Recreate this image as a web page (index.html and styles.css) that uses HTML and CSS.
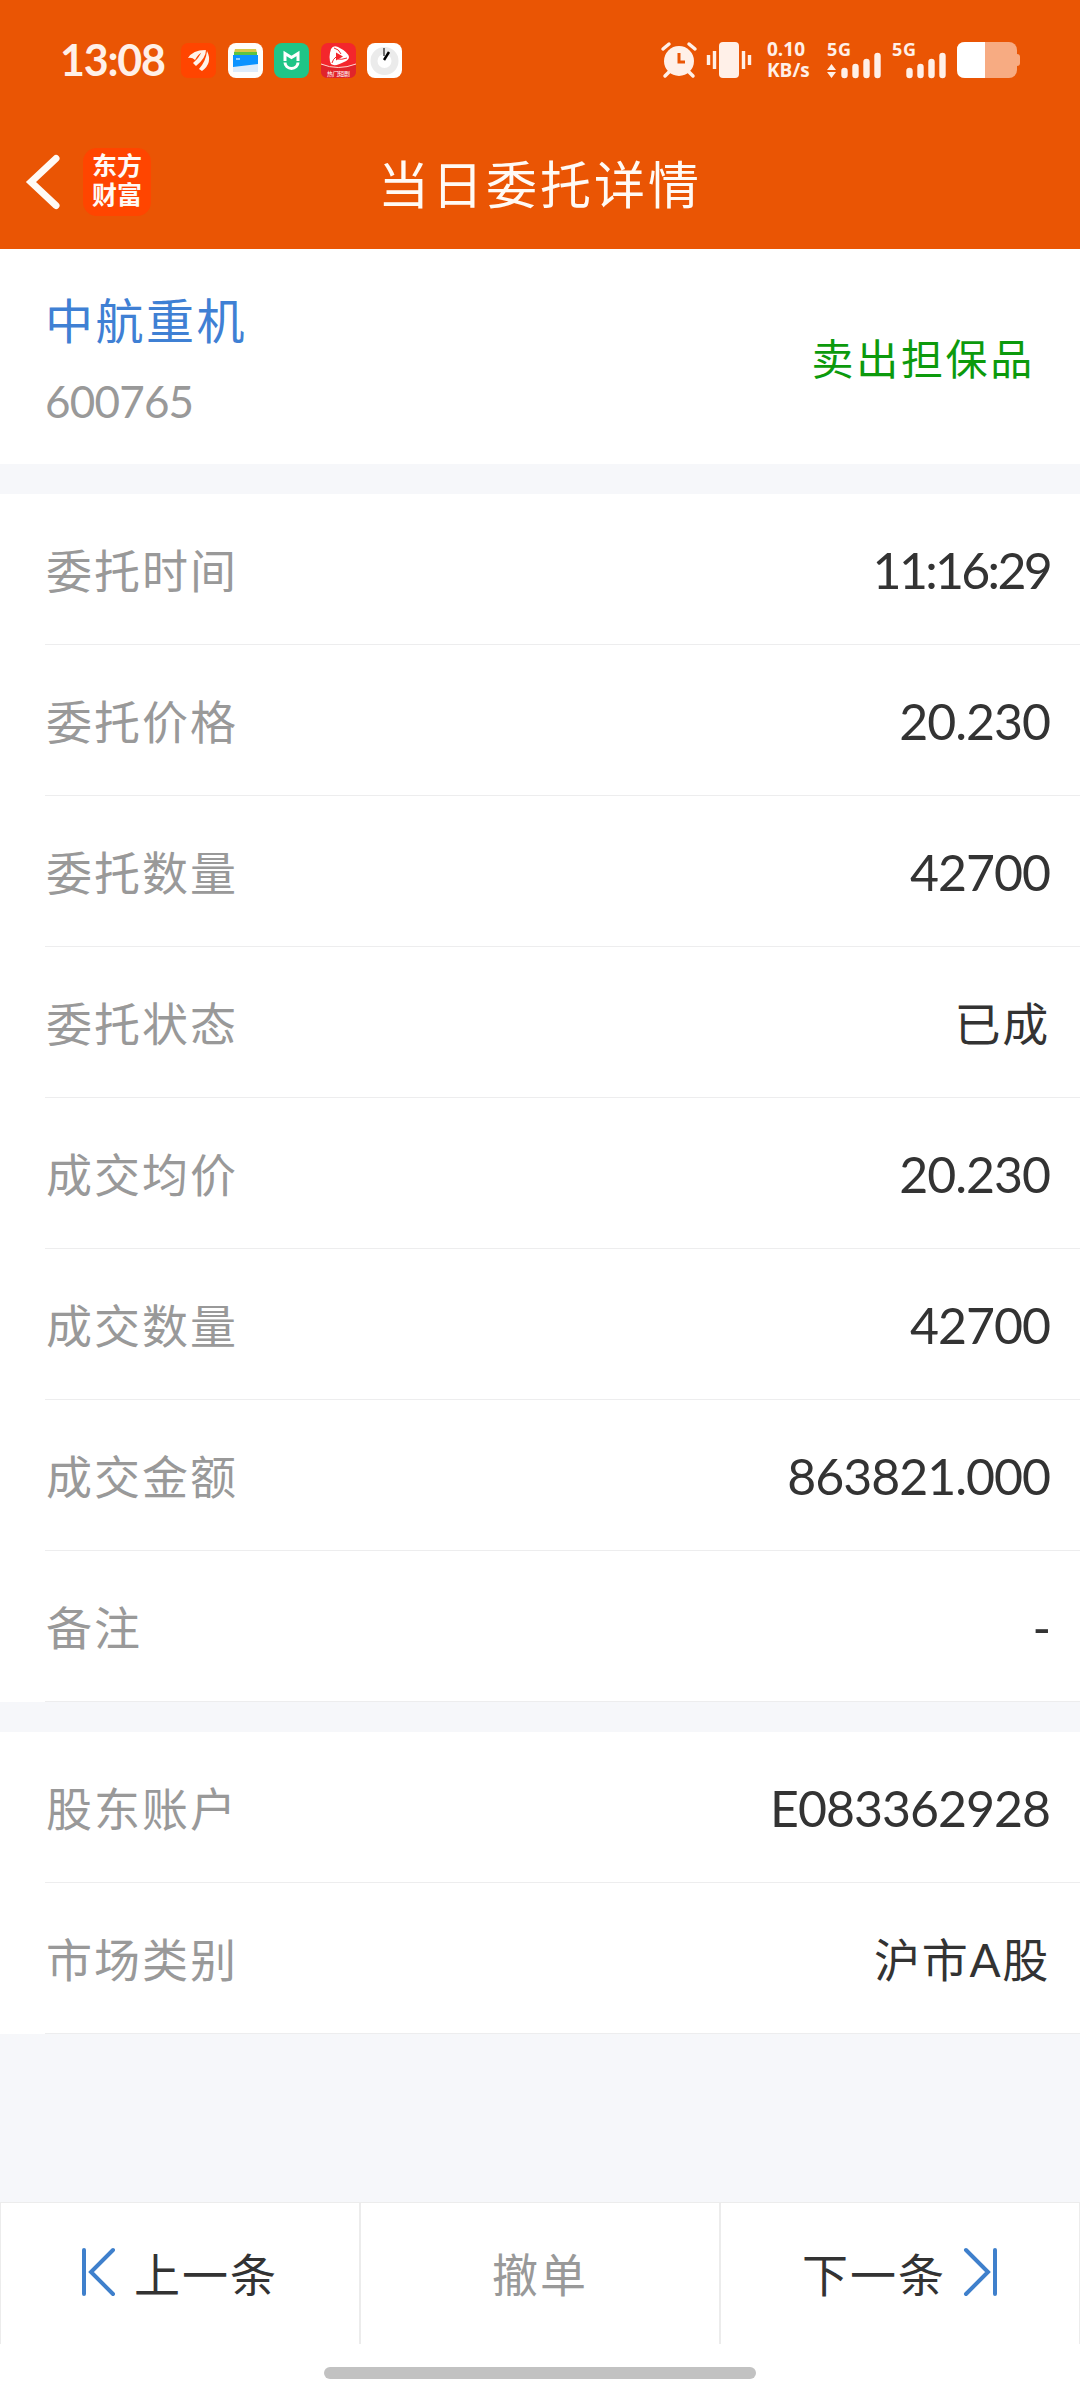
FILE: index.html
```html
<!DOCTYPE html>
<html lang="zh-CN">
<head>
  <meta charset="UTF-8" />
  <meta name="viewport" content="width=device-width, initial-scale=1" />
  <title>当日委托详情</title>
  <link rel="stylesheet" href="styles.css">
</head>
<body>

  <header class="header">
    <div class="status-bar">
      <span class="clock">13:08</span>
      <div class="app-icons">
        <svg viewBox="0 0 35 35">
          <rect width="35" height="35" rx="7" fill="#ff4500"/>
          <path d="M7 15Q12 7 24 7Q17 11 14 17Q11 14 7 15ZM12 20Q18 15 21 8L25 7Q25 15 15 23ZM18 26Q25 18 26 8Q32 20 21 28Z" fill="#fff3ea"/>
        </svg>
        <svg viewBox="0 0 35 35">
          <rect width="35" height="35" rx="8" fill="#fffdfa"/>
          <path d="M7 6H28L29 10H6Z" fill="#d8c84a"/>
          <path d="M6 9H29V14H6Z" fill="#5cc441"/>
          <path d="M5 12H30V23L5 25Z" fill="#0b93ff"/>
          <path d="M5 24L30 21V29H5Z" fill="#dcebfa"/>
          <path d="M8 16H12" stroke="#bfe2ff" stroke-width="1.5"/>
        </svg>
        <svg viewBox="0 0 35 35">
          <rect width="35" height="35" rx="8" fill="#1fc587"/>
          <path d="M11 18V10.500L17.500 14.500L24 10.500V18M11 19.500A6.500 6 0 0 0 24 19.500" fill="none" stroke="#fff" stroke-width="3"/>
        </svg>
        <svg viewBox="0 0 35 35">
          <rect width="35" height="35" rx="7" fill="#f4262c"/>
          <path d="M0 21Q17 28 35 21V28Q35 35 28 35H7Q0 35 0 28Z" fill="#e0242a"/>
          <path d="M0 21Q17 28 35 21" fill="none" stroke="#ffd9d0" stroke-width="1"/>
          <path d="M10 6Q12 2 17 4Q27 9 28 14Q28 17 23 19Q14 24 10 21Q7 15 10 6Z" fill="#fff"/>
          <path d="M15 9.500L22 13.500L15 17.500Z" fill="#f4262c"/>
          <path d="M13 5Q18 6 20 11M26 15Q20 17 17 16M11 20Q12 16 15 14" fill="none" stroke="#f4262c" stroke-width="1"/>
          <text class="tiny" x="6" y="33" textLength="23">热门短剧</text>
        </svg>
        <svg viewBox="0 0 35 35">
          <rect width="35" height="35" rx="8" fill="#fff"/>
          <circle cx="17.500" cy="18" r="10.500" fill="none" stroke="#ebebeb" stroke-width="7"/>
          <path d="M17 5V13" stroke="#444" stroke-width="1.500"/>
          <path d="M17 17L22 9" stroke="#000" stroke-width="2.500"/>
        </svg>
      </div>

      <div class="system-icons">
        <svg class="alarm" viewBox="0 0 36 36">
          <path d="M2 7L8 2M34 7L28 2M8 30L4 34M28 30L32 34" stroke="#fff0e8" stroke-width="3.500" stroke-linecap="round"/>
          <circle cx="18" cy="19" r="15" fill="#fff0e8"/>
          <path d="M18 11V20H24" fill="none" stroke="#ea5504" stroke-width="3"/>
        </svg>
        <svg class="vibrate" viewBox="0 0 44 36">
          <rect x="12" width="20" height="36" rx="4" fill="#fff0e8"/>
          <path d="M1.500 13V23M7.500 9V27M36.500 9V27M42.500 13V23" stroke="#fff0e8" stroke-width="3.400"/>
        </svg>
        <div class="net-speed">
          <span>0.10</span>
          <span>KB/s</span>
        </div>
        <svg class="signal" viewBox="0 0 54 36">
          <text class="net" x="0" y="14" textLength="24">5G</text>
          <path d="M0 28L4.500 22L9 28ZM0 30L4.500 36L9 30Z" fill="#fff0e8"/>
          <path d="M17.500 29V33M28.500 25V33M39.500 20V33M50.500 14V33" stroke="#fff0e8" stroke-width="6.400" stroke-linecap="round"/>
        </svg>
        <svg class="signal" viewBox="0 0 54 36">
          <text class="net" x="0" y="14" textLength="24">5G</text>
          <path d="M17.500 29V33M28.500 25V33M39.500 20V33M50.500 14V33" stroke="#fff0e8" stroke-width="6.400" stroke-linecap="round"/>
        </svg>
        <svg class="battery" viewBox="0 0 63 36">
          <rect width="60" height="36" rx="8" fill="#f7ab82"/>
          <path d="M60 12Q63 12 63 15V21Q63 24 60 24Z" fill="#f7ab82"/>
          <path d="M8 0H28V36H8Q0 36 0 28V8Q0 0 8 0Z" fill="#fff"/>
        </svg>
      </div>
    </div>

    <div class="nav">
      <div class="nav-left">
        <svg class="back" viewBox="0 0 34 56">
          <path d="M30 4.500L5 28L30 51.500" fill="none" stroke="#fffaf5" stroke-width="7" stroke-linecap="round"/>
        </svg>
        <div class="logo"><span>东方</span><span>财富</span></div>
      </div>
      <h1>当日委托详情</h1>
    </div>
  </header>

  <section class="stock">
    <div>
      <div class="stock-name">中航重机</div>
      <div class="stock-code">600765</div>
    </div>
    <div class="trade-type">卖出担保品</div>
  </section>

  <ul class="list">
    <li><span class="label">委托时间</span><span class="value time">11:16:29</span></li>
    <li><span class="label">委托价格</span><span class="value">20.230</span></li>
    <li><span class="label">委托数量</span><span class="value">42700</span></li>
    <li><span class="label">委托状态</span><span class="value text">已成</span></li>
    <li><span class="label">成交均价</span><span class="value">20.230</span></li>
    <li><span class="label">成交数量</span><span class="value">42700</span></li>
    <li><span class="label">成交金额</span><span class="value">863821.000</span></li>
    <li><span class="label">备注</span><span class="value">-</span></li>
  </ul>

  <ul class="list">
    <li><span class="label">股东账户</span><span class="value">E083362928</span></li>
    <li><span class="label">市场类别</span><span class="value text">沪市A股</span></li>
  </ul>

  <footer class="footer">
    <div class="actions">
      <button class="action">
        <svg viewBox="0 0 34 50">
          <path d="M2 3V47M31 3L9 25L31 47" fill="none" stroke="#3f80cc" stroke-width="4" stroke-linecap="round"/>
        </svg>
        上一条
      </button>
      <button class="action disabled">撤单</button>
      <button class="action">
        下一条
        <svg viewBox="0 0 34 50">
          <path d="M31 3V47M2 3L24 25L2 47" fill="none" stroke="#3f80cc" stroke-width="4" stroke-linecap="round"/>
        </svg>
      </button>
    </div>
    <div class="home-bar"></div>
  </footer>

</body>
</html>
```
FILE: styles.css
```css
* {
  box-sizing: border-box;
}

body {
  margin: 0;
  height: 2400px;
  display: flex;
  flex-direction: column;
  background-color: #f6f7fa;
  font-family: Lato, 'Noto Sans CJK SC', sans-serif;
  color: #333;
}

svg {
  display: block;
  overflow: visible;
}

/* Cabecera */
.header {
  height: 249px;
  background-color: #ea5504;
  color: #fffaf5;
}

.status-bar {
  height: 120px;
  padding: 0 60px;
  display: flex;
  align-items: center;
}

.clock {
  width: 121px;
  padding-bottom: 2px;
  font-size: 43px;
  font-weight: bold;
  letter-spacing: -1.2px;
  line-height: 1;
  color: #fff0e8;
}

.app-icons {
  display: flex;
  gap: 11.6px;
}

.app-icons svg {
  width: 35px;
  height: 35px;
}

.tiny {
  font-size: 6px;
  fill: #fff;
}

.system-icons {
  margin-left: auto;
  display: flex;
  align-items: center;
}

.system-icons svg {
  height: 36px;
}

.alarm {
  width: 36px;
  margin-right: 10px;
}

.vibrate {
  width: 44px;
  margin-right: 16px;
}

.net-speed {
  width: 60px;
  display: flex;
  flex-direction: column;
  font-family: 'Open Sans', sans-serif;
  font-size: 19px;
  font-weight: bold;
  line-height: 21px;
  color: #fff0e8;
}

.signal {
  width: 54px;
  margin-right: 11px;
}

.net {
  font-family: 'Noto Sans', sans-serif;
  font-size: 18px;
  font-weight: bold;
  fill: #fff0e8;
}

.battery {
  width: 63px;
}

.nav {
  height: 123px;
  display: grid;
  grid-template-columns: 1fr auto 1fr;
  align-items: center;
}

.nav-left {
  padding-left: 26px;
  display: flex;
  align-items: center;
  gap: 23px;
}

.back {
  width: 34px;
  height: 56px;
}

.logo {
  width: 68px;
  height: 68px;
  padding-bottom: 3px;
  border-radius: 14px;
  background-color: #ff4500;
  display: flex;
  flex-direction: column;
  align-items: center;
  justify-content: center;
  font-size: 25px;
  font-weight: bold;
  line-height: 29px;
}

h1 {
  margin: 0;
  font-size: 51px;
  font-weight: normal;
  letter-spacing: 3px;
}

/* Valor */
.stock {
  height: 215px;
  padding: 0 45px;
  display: flex;
  align-items: center;
  justify-content: space-between;
  background-color: #fff;
}

.stock-name {
  margin-top: 8px;
  font-size: 48px;
  line-height: 60px;
  letter-spacing: 2.5px;
  color: #3f80d4;
}

.stock-code {
  margin-top: 20px;
  font-size: 44px;
  line-height: 60px;
  letter-spacing: -0.8px;
  color: #999;
}

.trade-type {
  padding-bottom: 1px;
  font-size: 42px;
  letter-spacing: 2.7px;
  color: #0c9a0c;
}

/* Filas de detalle */
.list {
  margin: 30px 0 0;
  padding: 0;
  list-style: none;
  background-color: #fff;
}

.list li {
  height: 151px;
  margin-left: 45px;
  padding-right: 30px;
  display: flex;
  align-items: center;
  justify-content: space-between;
  border-bottom: 1px solid #ededee;
}

.label {
  padding: 0 0 3px 1px;
  font-size: 46px;
  letter-spacing: 2px;
  color: #999;
}

.value {
  padding-top: 2px;
  font-size: 50px;
  letter-spacing: -1px;
}

.value.time {
  letter-spacing: -2.7px;
}

.value.text {
  padding: 0 0 3px;
  font-size: 46px;
  letter-spacing: 1.7px;
}

/* Botones inferiores */
.footer {
  margin-top: auto;
  height: 198px;
  background-color: #fff;
}

.actions {
  height: 142px;
  display: grid;
  grid-template-columns: repeat(3, 1fr);
  border-top: 1px solid #ececec;
}

.action {
  padding: 0 0 3px;
  display: flex;
  align-items: center;
  justify-content: center;
  gap: 18px;
  background: none;
  border: 1px solid #ececec;
  border-width: 0 1px;
  font-family: inherit;
  font-size: 46px;
  letter-spacing: 2px;
  color: #333;
}

.action svg {
  width: 34px;
  height: 50px;
}

.action.disabled {
  color: #999;
}

.home-bar {
  width: 432px;
  height: 12px;
  margin: 23px auto 0;
  border-radius: 6px;
  background-color: #c2c2c2;
}
```
